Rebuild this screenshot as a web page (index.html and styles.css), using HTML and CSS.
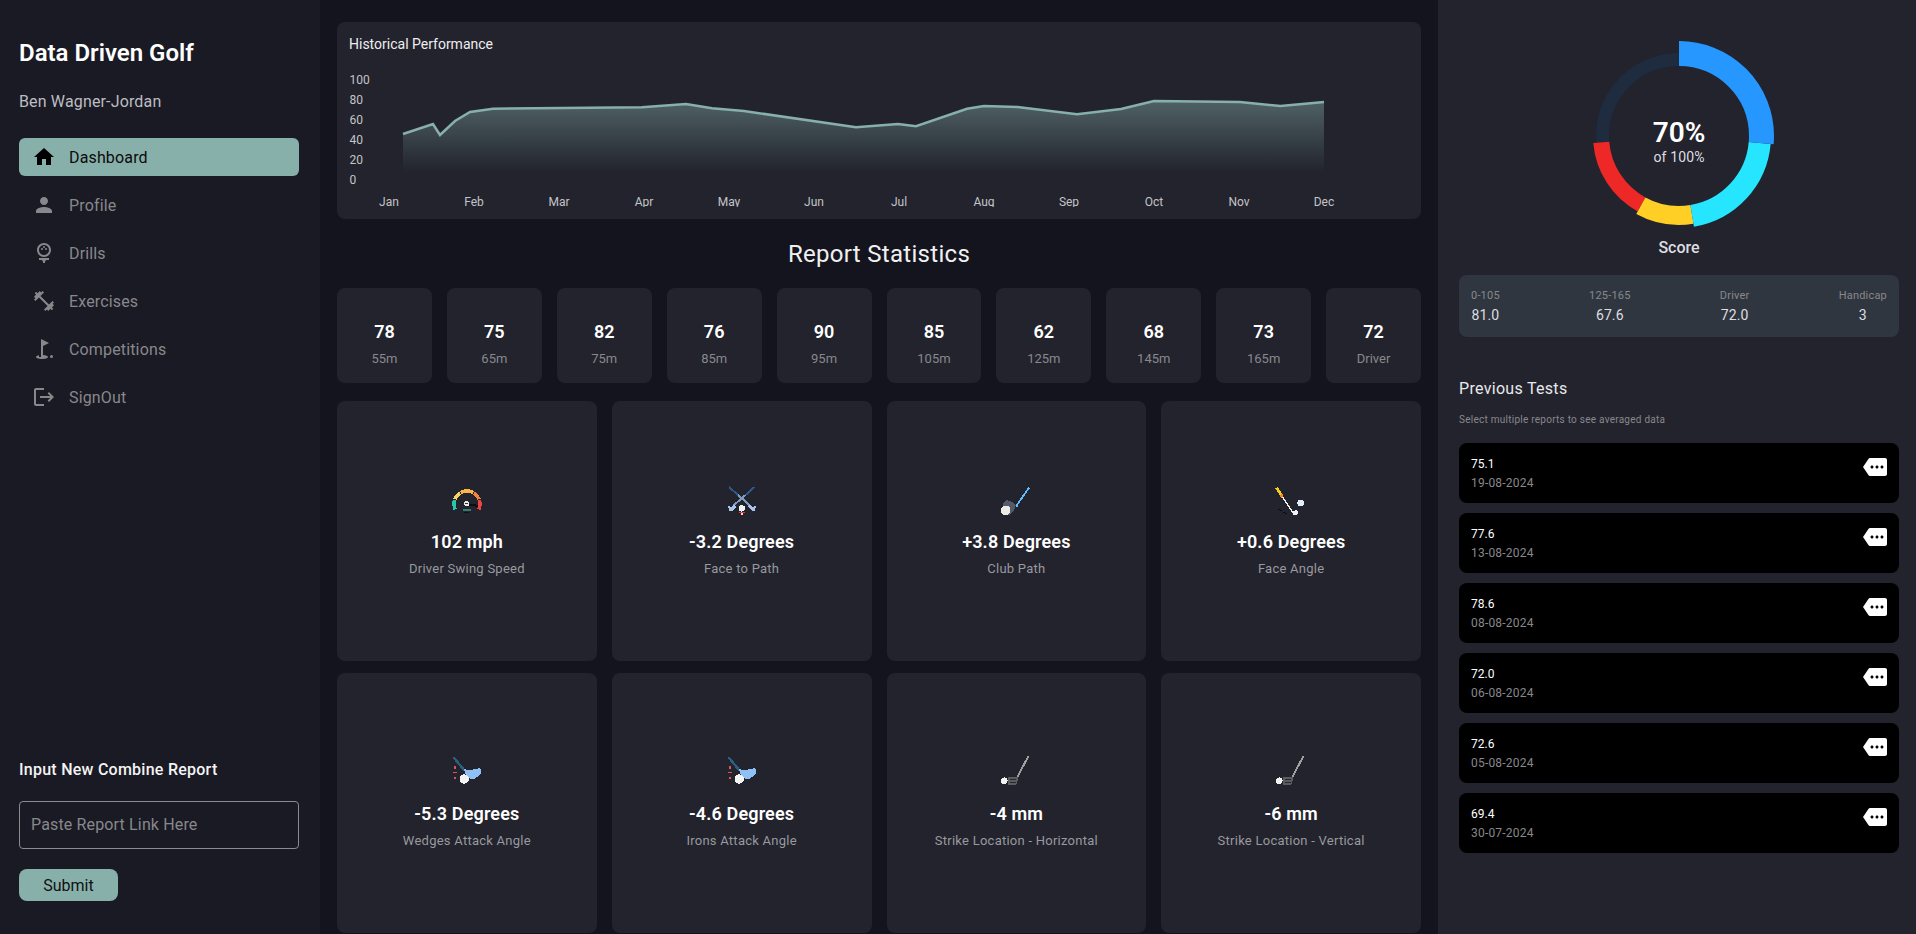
FILE: index.html
```html
<!DOCTYPE html>
<html lang="en">
<head>
<meta charset="utf-8">
<title>Data Driven Golf</title>
<link rel="stylesheet" href="styles.css">
</head>
<body>
<svg class="defs" width="0" height="0" aria-hidden="true">
  <symbol id="more" viewBox="0 0 24 24"><path d="M22 3H7c-.69 0-1.23.35-1.59.88L0 12l5.41 8.11c.36.53.9.89 1.59.89h15c1.1 0 2-.9 2-2V5c0-1.1-.9-2-2-2zM9 13.5c-.83 0-1.5-.67-1.5-1.500s.67-1.500 1.500-1.500 1.500.67 1.500 1.500-.67 1.500-1.500 1.500zm5 0c-.83 0-1.500-.67-1.500-1.500s.67-1.500 1.500-1.500 1.500.67 1.500 1.500-.67 1.500-1.500 1.500zm5 0c-.83 0-1.500-.67-1.500-1.500s.67-1.500 1.500-1.500 1.500.67 1.500 1.500-.67 1.500-1.500 1.500z"/></symbol>
  <symbol id="attack" viewBox="0 0 36 36">
    <path d="M4.3 1 16 15" stroke="#2a5f7e" stroke-width="2.4" fill="none"/>
    <path d="M14.5 13 19 14 24 13.500 31 12 32.500 15 31 19 26 22.500 21 23 17 19z" fill="#8ebff5"/>
    <circle cx="15.300" cy="23" r="4.700" fill="#f4f4f4"/>
    <path d="M5 10h2v3H5zM4 15.500h3.500v1.800H4zM5 20.500h2V23H5z" fill="#e4505a"/>
  </symbol>
  <symbol id="strike" viewBox="0 0 36 36">
    <path d="M30.300 0 18.700 23" stroke="#a0a0a0" stroke-width="1.800" fill="none"/>
    <path d="M9.500 20.500 14 20.500 18 21.500 20.500 21 18.500 28.500 10 28.500z" fill="#5c5c60"/>
    <path d="M12 23h6v1h-6zM12 25.500h6v1h-6z" fill="#2a2a2e"/>
    <circle cx="6.300" cy="24.700" r="3.300" fill="#f2f2f2"/>
  </symbol>
</svg>
<div class="app">
  <aside class="sidebar">
    <div>
      <h1 class="brand">Data Driven Golf</h1>
      <p class="user">Ben Wagner-Jordan</p>
      <nav class="nav">
        <a class="nav-item active"><svg class="nav-icon" viewBox="0 0 24 24"><path d="M10 20v-6h4v6h5v-8h3L12 3 2 12h3v8z"/></svg>Dashboard</a>
        <a class="nav-item"><svg class="nav-icon" viewBox="0 0 24 24"><path d="M12 12c2.21 0 4-1.79 4-4s-1.79-4-4-4-4 1.79-4 4 1.79 4 4 4zm0 2c-2.67 0-8 1.34-8 4v2h16v-2c0-2.66-5.33-4-8-4z"/></svg>Profile</a>
        <a class="nav-item"><svg class="nav-icon" viewBox="0 0 24 24"><path d="M12 16c3.87 0 7-3.13 7-7s-3.13-7-7-7-7 3.13-7 7 3.13 7 7 7zm0-12c2.76 0 5 2.24 5 5s-2.24 5-5 5-5-2.24-5-5 2.24-5 5-5z"/><circle cx="10" cy="8" r="1"/><circle cx="14" cy="8" r="1"/><circle cx="12" cy="6" r="1"/><path d="M7 19h2c1.1 0 2 .9 2 2v1h2v-1c0-1.1.9-2 2-2h2v-2H7v2z"/></svg>Drills</a>
        <a class="nav-item"><svg class="nav-icon" viewBox="0 0 24 24"><path d="M20.57 14.86 22 13.43 20.57 12 17 15.57 8.43 7 12 3.43 10.57 2 9.14 3.43 7.71 2 5.57 4.14 4.14 2.71 2.71 4.14l1.43 1.43L2 7.71l1.43 1.43L2 10.57 3.43 12 7 8.43 15.57 17 12 20.57 13.43 22l1.43-1.43L16.29 22l2.14-2.14 1.43 1.43 1.43-1.43-1.43-1.43L22 16.29z"/></svg>Exercises</a>
        <a class="nav-item"><svg class="nav-icon" viewBox="0 0 24 24"><circle cx="19.5" cy="19.5" r="1.5"/><path d="M17 5.92 9 2v18H7v-1.73c-1.79.35-3 .99-3 1.73 0 1.1 2.69 2 6 2s6-.9 6-2c0-.99-2.16-1.81-5-1.97V8.98l6-3.06z"/></svg>Competitions</a>
        <a class="nav-item"><svg class="nav-icon" viewBox="0 0 24 24"><path d="M17 7l-1.41 1.41L18.17 11H8v2h10.17l-2.58 2.58L17 17l5-5zM4 5h8V3H4c-1.1 0-2 .9-2 2v14c0 1.1.9 2 2 2h8v-2H4V5z"/></svg>SignOut</a>
      </nav>
    </div>
    <form class="report-form">
      <label class="report-label" for="link">Input New Combine Report</label>
      <input class="report-input" id="link" type="text" placeholder="Paste Report Link Here">
      <button class="report-submit" type="button">Submit</button>
    </form>
  </aside>

  <main class="main">
    <section class="chart-card">
      <h2 class="chart-title">Historical Performance</h2>
      <svg class="chart" viewBox="349 54 1060 153" width="1060" height="153">
        <defs>
          <linearGradient id="area" gradientUnits="userSpaceOnUse" x1="0" y1="100" x2="0" y2="172">
            <stop offset="0" stop-color="#88b0aa" stop-opacity=".45"/>
            <stop offset="1" stop-color="#88b0aa" stop-opacity="0"/>
          </linearGradient>
        </defs>
        <polygon fill="url(#area)" points="403,180 403,134 433,124 440,135 455,121 470,112 493,108.7 642,107.3 686,104 712,108.3 744,111 856,127.3 898,124 916,126.3 967,108.7 984,106 1017.5,107 1077,114.3 1121,109 1154,101 1240,102 1280.5,106 1324,102 1324,180"/>
        <polyline fill="none" stroke="#88b0aa" stroke-width="2.5" points="403,134 433,124 440,135 455,121 470,112 493,108.7 642,107.3 686,104 712,108.3 744,111 856,127.3 898,124 916,126.3 967,108.7 984,106 1017.5,107 1077,114.3 1121,109 1154,101 1240,102 1280.5,106 1324,102"/>
        <g class="axis">
          <text x="349.5" y="84">100</text>
          <text x="349.5" y="104">80</text>
          <text x="349.5" y="124">60</text>
          <text x="349.5" y="144">40</text>
          <text x="349.5" y="164">20</text>
          <text x="349.5" y="184">0</text>
        </g>
        <g class="axis axis-x">
          <text x="389" y="206">Jan</text>
          <text x="474" y="206">Feb</text>
          <text x="559" y="206">Mar</text>
          <text x="644" y="206">Apr</text>
          <text x="729" y="206">May</text>
          <text x="814" y="206">Jun</text>
          <text x="899" y="206">Jul</text>
          <text x="984" y="206">Aug</text>
          <text x="1069" y="206">Sep</text>
          <text x="1154" y="206">Oct</text>
          <text x="1239" y="206">Nov</text>
          <text x="1324" y="206">Dec</text>
        </g>
      </svg>
    </section>

    <h2 class="section-title">Report Statistics</h2>

    <section class="stat-grid">
      <div class="stat"><strong>78</strong><span>55m</span></div>
      <div class="stat"><strong>75</strong><span>65m</span></div>
      <div class="stat"><strong>82</strong><span>75m</span></div>
      <div class="stat"><strong>76</strong><span>85m</span></div>
      <div class="stat"><strong>90</strong><span>95m</span></div>
      <div class="stat"><strong>85</strong><span>105m</span></div>
      <div class="stat"><strong>62</strong><span>125m</span></div>
      <div class="stat"><strong>68</strong><span>145m</span></div>
      <div class="stat"><strong>73</strong><span>165m</span></div>
      <div class="stat"><strong>72</strong><span>Driver</span></div>
    </section>

    <section class="metric-grid">
      <article class="metric">
        <svg class="metric-icon" viewBox="0 0 36 36" shape-rendering="crispEdges">
          <g fill="none" stroke-width="3.4">
            <path stroke="#2bc4a8" d="M6.2 25.5A13 13 0 0 1 5.6 16"/>
            <path stroke="#f7d264" d="M5.9 15.1A13 13 0 0 1 11.1 9"/>
            <path stroke="#f6b44a" d="M11.9 8.500A13 13 0 0 1 24.100 8.500"/>
            <path stroke="#f2853d" d="M24.900 9A13 13 0 0 1 30.100 15.100"/>
            <path stroke="#ee4444" d="M30.400 16A13 13 0 0 1 29.800 25.500"/>
          </g>
          <path d="M18 19.500h8.500v2H18z" fill="#0d0d12"/>
          <path d="M26 21h3v2h-3z" fill="#0d0d12"/>
          <circle cx="17.700" cy="19.700" r="2.700" fill="#e8e8e8"/>
          <rect x="16" y="19" width="3" height="1" fill="#333"/>
          <rect x="14" y="25" width="8" height="2" fill="#2f7f72"/>
          <rect x="15" y="28" width="5" height="1" fill="#111"/>
        </svg>
        <strong>102 mph</strong><span>Driver Swing Speed</span>
      </article>
      <article class="metric">
        <svg class="metric-icon" viewBox="0 0 36 36" shape-rendering="crispEdges">
          <g fill="none" stroke-width="2">
            <path stroke="#2e5688" d="M5 3 14 11"/>
            <path stroke="#7f9cc0" d="M14 11 26 21.500"/>
            <path stroke="#2e5688" d="M30.500 3 21.500 11"/>
            <path stroke="#7f9cc0" d="M21.500 11 9.500 21.500"/>
          </g>
          <path d="M4 21.500 7 23 10 20.500 12 23 8 27 5 26.500z" fill="#a8c4e8"/>
          <path d="M32 21.500 29 23 26 20.500 24 23 28 27 31 26.500z" fill="#a8c4e8"/>
          <circle cx="17.800" cy="24.400" r="3.200" fill="#f2f2f2"/>
          <rect x="15" y="27.600" width="5.500" height="1.400" fill="#e33"/>
          <rect x="17" y="29" width="1.500" height="2" fill="#ddd"/>
        </svg>
        <strong>-3.2 Degrees</strong><span>Face to Path</span>
      </article>
      <article class="metric">
        <svg class="metric-icon" viewBox="0 0 36 36" shape-rendering="crispEdges">
          <path d="M31 3.700 18.700 21.300" stroke="#62bcff" stroke-width="1.800" fill="none"/>
          <path d="M5 19 9 16 14 18 18 21 16 27 11 31.500 5 28z" fill="#555a6b"/>
          <circle cx="7.700" cy="26.300" r="4.800" fill="#ecebe6"/>
          <rect x="17.500" y="20" width="2.500" height="2.500" fill="#62bcff"/>
        </svg>
        <strong>+3.8 Degrees</strong><span>Club Path</span>
      </article>
      <article class="metric">
        <svg class="metric-icon" viewBox="0 0 36 36" shape-rendering="crispEdges">
          <path d="M3.500 3.700 8 10.500" stroke="#f5cb1c" stroke-width="3" fill="none"/>
          <path d="M8 10.500 9.500 13" stroke="#f08a1c" stroke-width="3" fill="none"/>
          <path d="M9.500 13 19.500 28" stroke="#f0f0f0" stroke-width="1.600" fill="none"/>
          <path d="M19 27 24 26 25.500 28.500 23 31 20 30.500z" fill="#eef"/>
          <circle cx="27.700" cy="19" r="3.300" fill="#dfeef8"/>
          <path d="M4.500 24.500h2v1h-2zM7 26h2v1H7zM9.500 27.500h2v1h-2zM12 29h2v1h-2z" fill="#0b0b10"/>
        </svg>
        <strong>+0.6 Degrees</strong><span>Face Angle</span>
      </article>
      <article class="metric">
        <svg class="metric-icon" shape-rendering="crispEdges"><use href="#attack"/></svg>
        <strong>-5.3 Degrees</strong><span>Wedges Attack Angle</span>
      </article>
      <article class="metric">
        <svg class="metric-icon" shape-rendering="crispEdges"><use href="#attack"/></svg>
        <strong>-4.6 Degrees</strong><span>Irons Attack Angle</span>
      </article>
      <article class="metric">
        <svg class="metric-icon" shape-rendering="crispEdges"><use href="#strike"/></svg>
        <strong>-4 mm</strong><span>Strike Location - Horizontal</span>
      </article>
      <article class="metric">
        <svg class="metric-icon" shape-rendering="crispEdges"><use href="#strike"/></svg>
        <strong>-6 mm</strong><span>Strike Location - Vertical</span>
      </article>
    </section>
  </main>

  <aside class="panel">
    <div class="donut">
      <svg class="donut-chart" viewBox="-100 -100 200 200" width="200" height="200">
        <g fill="none">
          <circle r="76.500" stroke="#1f2b3f" stroke-width="13" pathLength="360" stroke-dasharray="94.700 360" transform="rotate(175.300)"/>
          <circle r="78" stroke="#ee2727" stroke-width="16" pathLength="360" stroke-dasharray="56.600 360" transform="rotate(118.700)"/>
          <circle r="79.500" stroke="#ffcf26" stroke-width="19" pathLength="360" stroke-dasharray="38.100 360" transform="rotate(80.600)"/>
          <circle r="81" stroke="#26e5ff" stroke-width="22" pathLength="360" stroke-dasharray="75.600 360" transform="rotate(5)"/>
          <circle r="82.500" stroke="#2697ff" stroke-width="25" pathLength="360" stroke-dasharray="95 360" transform="rotate(-90)"/>
        </g>
      </svg>
      <div class="donut-center"><strong>70%</strong><span>of 100%</span></div>
    </div>
    <div class="score-label">Score</div>
    <div class="summary">
      <div class="summary-col"><span>0-105</span><strong>81.0</strong></div>
      <div class="summary-col"><span>125-165</span><strong>67.6</strong></div>
      <div class="summary-col"><span>Driver</span><strong>72.0</strong></div>
      <div class="summary-col"><span>Handicap</span><strong>3</strong></div>
    </div>
    <h3 class="tests-title">Previous Tests</h3>
    <p class="tests-sub">Select multiple reports to see averaged data</p>
    <ul class="tests">
      <li class="test"><div><b>75.1</b><span>19-08-2024</span></div><svg class="test-icon"><use href="#more"/></svg></li>
      <li class="test"><div><b>77.6</b><span>13-08-2024</span></div><svg class="test-icon"><use href="#more"/></svg></li>
      <li class="test"><div><b>78.6</b><span>08-08-2024</span></div><svg class="test-icon"><use href="#more"/></svg></li>
      <li class="test"><div><b>72.0</b><span>06-08-2024</span></div><svg class="test-icon"><use href="#more"/></svg></li>
      <li class="test"><div><b>72.6</b><span>05-08-2024</span></div><svg class="test-icon"><use href="#more"/></svg></li>
      <li class="test"><div><b>69.4</b><span>30-07-2024</span></div><svg class="test-icon"><use href="#more"/></svg></li>
    </ul>
  </aside>
</div>
</body>
</html>
```

FILE: styles.css
```css
* { box-sizing: border-box; }
html, body { margin: 0; height: 100%; overflow: hidden; }
body { background: #14141e; color: #fff; font-family: Roboto, "Liberation Sans", sans-serif; }
h1, h2, h3, p, ul { margin: 0; padding: 0; }
ul { list-style: none; }
.defs { position: absolute; }

.app { display: grid; grid-template-columns: 320px 1118px 478px; height: 934px; overflow: hidden; }

/* sidebar */
.sidebar { background: #191a23; padding: 39px 21px 33px 19px; display: flex; flex-direction: column; justify-content: space-between; }
.brand { font-size: 24px; font-weight: 600; line-height: 28px; }
.user { margin-top: 25px; font-size: 16px; line-height: 20px; letter-spacing: .15px; color: #bdbdc2; }
.nav { display: flex; flex-direction: column; gap: 10px; margin-top: 26px; }
.nav-item { display: flex; align-items: center; height: 38px; padding-left: 13px; border-radius: 6px; font-size: 16px; letter-spacing: .15px; color: #88888c; }
.nav-icon { width: 24px; height: 24px; margin-right: 13px; fill: #88888c; flex: none; }
.nav-item.active { background: #88b0aa; color: #0b0b0b; }
.nav-item.active .nav-icon { fill: #000; }
.report-form { display: flex; flex-direction: column; align-items: flex-start; }
.report-label { font-size: 16px; font-weight: 500; line-height: 20px; letter-spacing: .25px; color: #f4f4f4; }
.report-input { width: 280px; height: 48px; margin-top: 21px; padding: 0 11px 2px; background: transparent; border: 1px solid #8a8a92; border-radius: 4px; font: 400 16px Roboto, sans-serif; letter-spacing: .15px; color: #fff; }
.report-input::placeholder { color: #88888c; opacity: 1; }
.report-submit { width: 99px; height: 32px; margin-top: 20px; background: #88b0aa; border: 0; border-radius: 8px; font: 400 16px Roboto, sans-serif; color: #111; }

/* main */
.main { padding: 22px 17px 0; overflow: hidden; }
.chart-card { height: 197px; padding: 12px 12px 12px; background: #22232d; border-radius: 8px; }
.chart-title { font-size: 14px; font-weight: 400; line-height: 20px; color: #eee; }
.chart { display: block; overflow: hidden; }
.axis text { font-size: 12px; fill: #c4c4c8; font-family: Roboto, sans-serif; }
.axis-x text { text-anchor: middle; }
.section-title { margin: 21px 0 20px; font-size: 24px; font-weight: 400; line-height: 28px; letter-spacing: .3px; text-align: center; color: #f0f0f0; }
.stat-grid { display: grid; grid-template-columns: repeat(10, 1fr); gap: 15px; }
.stat { height: 95px; padding-top: 17px; background: #22232d; border-radius: 8px; display: flex; flex-direction: column; align-items: center; justify-content: center; }
.stat strong { font-size: 18px; font-weight: 600; line-height: 24px; }
.stat span { margin-top: 6px; font-size: 13px; line-height: 18px; color: #88888c; }
.metric-grid { display: grid; grid-template-columns: repeat(4, 1fr); gap: 12px 15px; margin-top: 18px; }
.metric { height: 260px; background: #22232d; border-radius: 8px; display: flex; flex-direction: column; align-items: center; justify-content: center; }
.metric-icon { width: 36px; height: 36px; }
.metric strong { margin-top: 10px; font-size: 18px; font-weight: 600; line-height: 24px; letter-spacing: .15px; }
.metric span { margin-top: 6px; margin-bottom: 1px; font-size: 13px; line-height: 18px; letter-spacing: .25px; color: #99999e; }

/* right panel */
.panel { background: #22232d; padding: 36px 17px 0 21px; }
.donut { position: relative; width: 200px; height: 200px; margin: 0 auto; }
.donut-chart { display: block; }
.donut-center { position: absolute; inset: 0; padding-top: 10px; display: flex; flex-direction: column; align-items: center; justify-content: center; }
.donut-center strong { font-size: 28px; font-weight: 600; line-height: 32px; }
.donut-center span { font-size: 14px; line-height: 16px; letter-spacing: .15px; color: #dedee2; }
.score-label { margin-top: 2px; text-align: center; font-size: 16px; font-weight: 500; line-height: 20px; color: #dedee2; }
.summary { display: flex; justify-content: space-between; height: 62px; margin-top: 17px; padding: 13px 12px 0; background: #30363f; border-radius: 8px; }
.summary-col { display: flex; flex-direction: column; align-items: center; }
.summary-col span { font-size: 11px; line-height: 16px; color: #88888c; letter-spacing: .2px; }
.summary-col strong { margin-top: 1px; font-size: 14px; font-weight: 400; line-height: 20px; color: #dedee2; letter-spacing: .1px; }
.tests-title { margin-top: 42px; font-size: 16px; font-weight: 400; line-height: 20px; letter-spacing: .3px; color: #e8e8ec; }
.tests-sub { margin-top: 14px; font-size: 10px; line-height: 14px; letter-spacing: .25px; color: #88888c; }
.tests { display: flex; flex-direction: column; gap: 10px; margin-top: 16px; }
.test { display: flex; justify-content: space-between; height: 60px; padding: 13px 12px 0; background: #000; border-radius: 8px; }
.test b { display: block; font-size: 12px; font-weight: 400; line-height: 16px; color: #fff; }
.test span { display: block; margin-top: 3px; font-size: 12px; line-height: 16px; color: #88888c; letter-spacing: .2px; }
.test-icon { width: 24px; height: 24px; margin-top: -1px; fill: #fff; }
```
